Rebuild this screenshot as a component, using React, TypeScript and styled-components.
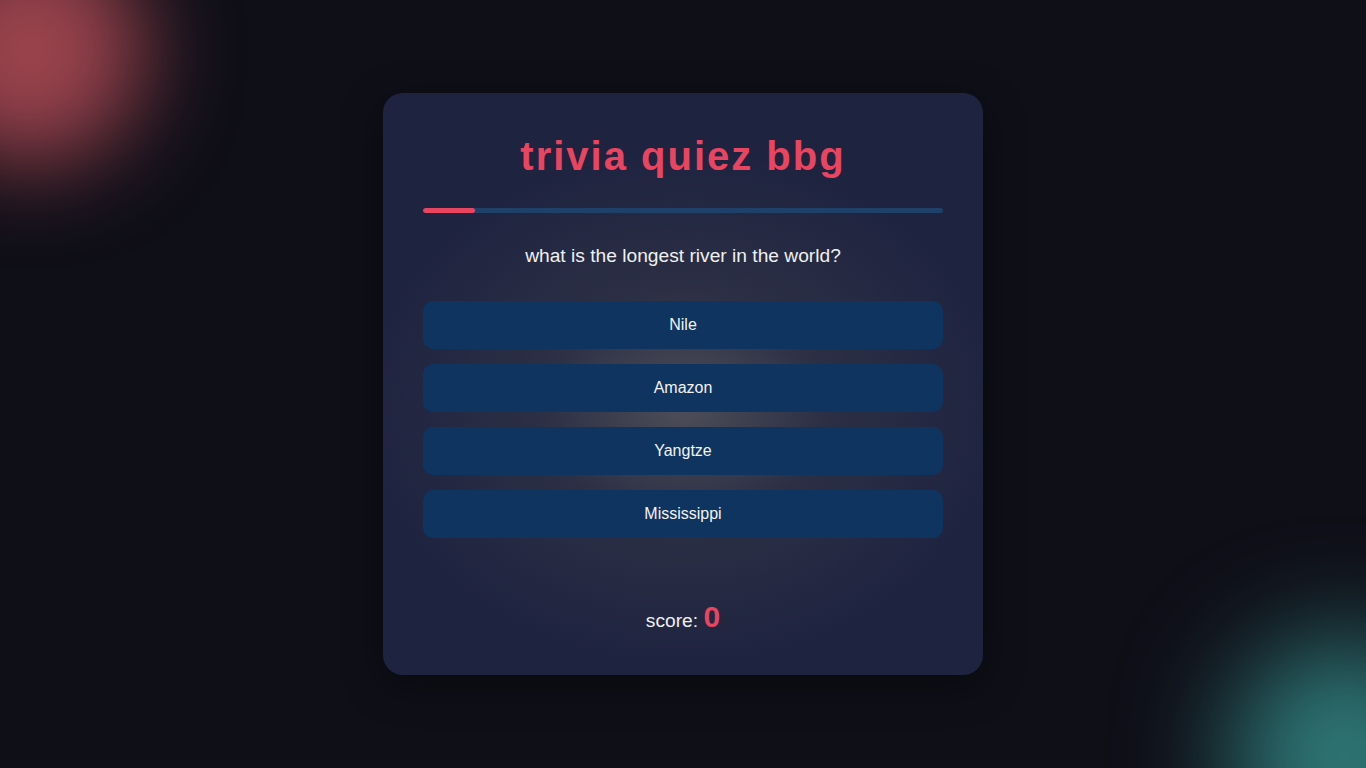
import React from "react";
import styled, { createGlobalStyle } from "styled-components";

const Global = createGlobalStyle`
  html, body { margin: 0; padding: 0; }
  body {
    background: #0f0f18;
    font-family: "Liberation Sans", Arial, sans-serif;
    overflow: hidden;
  }
`;

const Page = styled.div`
  position: relative;
  width: 100vw;
  height: 100vh;
  display: flex;
  align-items: flex-start;
  justify-content: center;
  padding-top: 93px;
  box-sizing: border-box;
  overflow: hidden;
  background: #0f0f18;
`;

const Blob = styled.div<{ $color: string; $x: number; $y: number; $size: number; $blur: number }>`
  position: absolute;
  left: ${(p) => p.$x - p.$size / 2}px;
  top: ${(p) => p.$y - p.$size / 2}px;
  width: ${(p) => p.$size}px;
  height: ${(p) => p.$size}px;
  border-radius: 50%;
  background: ${(p) => p.$color};
  filter: blur(${(p) => p.$blur}px);
  pointer-events: none;
`;

const Card = styled.div`
  position: relative;
  width: 600px;
  height: 582px;
  box-sizing: border-box;
  padding: 40px;
  border-radius: 20px;
  background:
    radial-gradient(ellipse 320px 260px at 50% 54%, rgba(85, 85, 92, 0.85) 0%, rgba(60, 62, 75, 0.45) 45%, rgba(30, 35, 64, 0) 100%),
    #1e2340;
  box-shadow: 0 10px 40px rgba(0, 0, 0, 0.45);
  display: flex;
  flex-direction: column;
  align-items: stretch;
`;

const Title = styled.h1`
  margin: 0;
  text-align: center;
  color: #e94560;
  font-family: "Liberation Sans", Arial, sans-serif;
  font-weight: 700;
  font-size: 40px;
  line-height: 46px;
  letter-spacing: 2px;
`;

const Track = styled.div`
  margin-top: 29px;
  height: 5px;
  border-radius: 3px;
  background: #1f4068;
  overflow: hidden;
`;

const Fill = styled.div`
  height: 100%;
  background: #e94560;
  border-radius: 3px;
`;

const Question = styled.h2`
  margin: 32px 0 0;
  text-align: center;
  color: #f0f0f0;
  font-weight: 400;
  font-size: 19.2px;
  line-height: 22px;
`;

const Answers = styled.div`
  margin-top: 34px;
  display: flex;
  flex-direction: column;
  gap: 15px;
`;

const Answer = styled.button`
  height: 48px;
  border: none;
  border-radius: 10px;
  background: #0f3460;
  color: #f2f2f2;
  font-family: "Liberation Sans", Arial, sans-serif;
  font-size: 16px;
  cursor: pointer;
`;

const Score = styled.div`
  margin-top: auto;
  text-align: center;
  color: #f0f0f0;
  font-size: 19.2px;
  line-height: 34px;
  margin-bottom: -3px;
`;

const ScoreValue = styled.span`
  color: #e94560;
  font-size: 30px;
  font-weight: 700;
`;

export default function App() {
  const answers = ["Nile", "Amazon", "Yangtze", "Mississippi"];
  const progress = 10;
  return (
    <Page>
      <Global />
      <Blob $color="#9a434d" $x={30} $y={50} $size={230} $blur={45} />
      <Blob $color="#2f7a78" $x={1345} $y={755} $size={230} $blur={55} />
      <Card>
        <Title>trivia quiez bbg</Title>
        <Track>
          <Fill style={{ width: `${progress}%` }} />
        </Track>
        <Question>what is the longest river in the world?</Question>
        <Answers>
          {answers.map((a) => (
            <Answer key={a}>{a}</Answer>
          ))}
        </Answers>
        <Score>
          score: <ScoreValue>0</ScoreValue>
        </Score>
      </Card>
    </Page>
  );
}
